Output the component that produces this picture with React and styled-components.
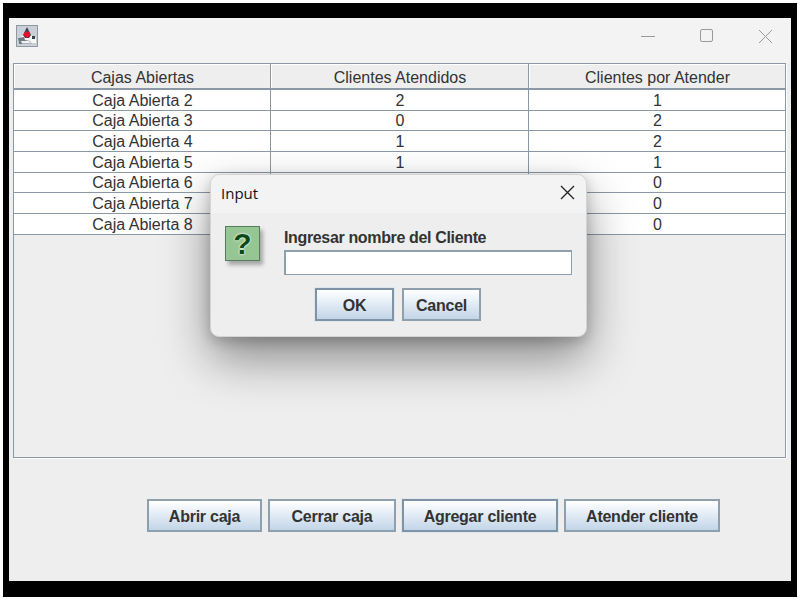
import React from "react";
import styled, { createGlobalStyle } from "styled-components";

const GlobalStyle = createGlobalStyle`
  html, body {
    margin: 0;
    background: #fff;
  }
  * {
    box-sizing: border-box;
  }
`;

const Frame = styled.div`
  width: 800px;
  height: 600px;
  padding: 3px;
  overflow: hidden;
`;

const Bezel = styled.div`
  height: 594px;
  background: #000;
  padding: 15px 6px 16px;
`;

const Win = styled.div`
  position: relative;
  height: 563px;
  background: #eeeeee;
  font-family: "Liberation Sans", Arial, sans-serif;
  color: #333;
  display: flex;
  flex-direction: column;
`;

const TitleBar = styled.div`
  height: 45px;
  flex: none;
  background: #f3f3f3;
  display: flex;
  align-items: center;
  padding: 0 18px 9px 7px;
`;

const Controls = styled.div`
  margin-left: auto;
  display: flex;
  align-items: center;
  gap: 44px;
`;

const TablePanel = styled.div`
  margin: 0 5px 0 4px;
  height: 395px;
  border: 1px solid #8b99a6;
  box-shadow: 1px 1px 0 #fff;
  flex: none;
`;

const Row = styled.div`
  display: grid;
  grid-template-columns: 256px 258px 1fr;
  height: ${(p) => (p.$header ? "26px" : "20.67px")};
  background: ${(p) => (p.$header ? "#eeeeee" : "#fff")};
  border-bottom: ${(p) => (p.$header ? "2px" : "1.5px")} solid #8b99a6;
`;

const Cell = styled.div`
  font-size: 16px;
  line-height: 1;
  padding: ${(p) => (p.$header ? "3px" : "2px")} 0 0 1px;
  display: flex;
  align-items: center;
  justify-content: center;
  border-left: ${(p) => (p.$first ? "none" : "1.5px solid #8b99a6")};
  box-shadow: ${(p) => (p.$header ? "inset 1px 1px 0 #fff" : "none")};
`;

const ButtonBar = styled.div`
  display: flex;
  gap: 6px;
  padding: 41px 0 0 138px;
`;

const Btn = styled.div`
  height: 33px;
  width: ${(p) => p.$w}px;
  padding-top: 2px;
  border: ${(p) => (p.$focus ? "2.5px solid #7f93a6" : "2px solid #8e9fae")};
  background: linear-gradient(#ffffff 0%, #f4f8fc 18%, #c2d5e8 100%);
  box-shadow: ${(p) => (p.$focus ? "0 0 0 1px #dfe6ec" : "none")};
  font-size: 16px;
  letter-spacing: -0.25px;
  font-weight: bold;
  color: #333;
  display: flex;
  align-items: center;
  justify-content: center;
`;

const Dialog = styled.div`
  position: absolute;
  left: 201px;
  top: 156px;
  width: 377px;
  height: 163px;
  background: #eeeeee;
  border-radius: 9px;
  border: 1px solid #d4d4d4;
  box-shadow: 0 22px 48px rgba(0, 0, 0, 0.42), 0 4px 14px rgba(0, 0, 0, 0.2);
`;

const DialogTitle = styled.div`
  height: 38px;
  background: #f3f3f3;
  border-radius: 9px 9px 0 0;
  display: flex;
  align-items: center;
  justify-content: space-between;
  padding: 0 11px 3px 10px;
  font-family: "Open Sans", "Noto Sans", sans-serif;
  font-size: 15px;
  color: #111;
`;

const DialogBody = styled.div`
  display: grid;
  grid-template-columns: 35px 1fr;
  column-gap: 24px;
  padding: 13px 14px 0 14px;
`;

const QuestionIcon = styled.div`
  width: 35px;
  height: 35px;
  background: #97c695;
  border: 1px solid #527f59;
  box-shadow: 3px 4px 4px rgba(0, 0, 0, 0.3);
  color: #0b4a16;
  font-size: 30px;
  font-weight: bold;
  line-height: 33px;
  text-align: center;
  text-shadow: 0 0 2px #eefbe9, 0 0 2px #eefbe9, 0 0 1px #eefbe9;
`;

const PromptCol = styled.div`
  display: flex;
  flex-direction: column;
  padding-top: 3px;
`;

const Prompt = styled.div`
  font-size: 16px;
  letter-spacing: -0.35px;
  font-weight: bold;
  line-height: 17px;
  color: #333;
`;

const NameInput = styled.div`
  margin-top: 4px;
  height: 25px;
  background: #fff;
  border: 2px solid #8e9fae;
  border-right-width: 1px;
  border-bottom-width: 1px;
`;

const DialogButtons = styled.div`
  display: flex;
  gap: 8px;
  margin-top: 13px;
  padding-left: 31px;
`;

const rows = [
  ["Caja Abierta 2", "2", "1"],
  ["Caja Abierta 3", "0", "2"],
  ["Caja Abierta 4", "1", "2"],
  ["Caja Abierta 5", "1", "1"],
  ["Caja Abierta 6", "", "0"],
  ["Caja Abierta 7", "", "0"],
  ["Caja Abierta 8", "", "0"],
];

const AppIcon = () => (
  <svg width="22" height="22" viewBox="0 0 22 22">
    <rect x="0.5" y="0.5" width="21" height="21" fill="#c9d0d7" stroke="#8f99a3" />
    <path d="M2 13l6-3 3-8 3 8 6 3v5H2z" fill="#f7f7f7" />
    <path d="M7 10l4-8 4 8-2 3H9z" fill="#3a424c" />
    <path d="M2 13l6-1 1 3 5 1 2 3H3z" fill="#6f7983" />
    <path d="M5 16h8l3 2.5H6z" fill="#eef0f2" />
    <circle cx="11" cy="9.5" r="3" fill="#e8102a" />
    <rect x="16" y="11" width="3" height="3" fill="#39424c" />
  </svg>
);

const MinIcon = () => (
  <svg width="15" height="14" viewBox="0 0 15 14">
    <path d="M0 7.5h14" stroke="#9a9a9a" strokeWidth="1" />
  </svg>
);

const MaxIcon = () => (
  <svg width="14" height="14" viewBox="0 0 14 14">
    <rect x="0.5" y="0.5" width="12" height="12" rx="1.5" fill="none" stroke="#9a9a9a" />
  </svg>
);

const CloseIcon = ({ color = "#9a9a9a", width = 1 }) => (
  <svg width="15" height="15" viewBox="0 0 15 15">
    <path d="M1 1l13 13M14 1L1 14" stroke={color} strokeWidth={width} fill="none" />
  </svg>
);

export default function App() {
  return (
    <Frame>
      <GlobalStyle />
      <Bezel>
        <Win>
          <TitleBar>
            <AppIcon />
            <Controls>
              <MinIcon />
              <MaxIcon />
              <CloseIcon />
            </Controls>
          </TitleBar>
          <TablePanel>
            <Row $header>
              <Cell $first $header>Cajas Abiertas</Cell>
              <Cell $header>Clientes Atendidos</Cell>
              <Cell $header>Clientes por Atender</Cell>
            </Row>
            {rows.map((r) => (
              <Row key={r[0]}>
                <Cell $first>{r[0]}</Cell>
                <Cell>{r[1]}</Cell>
                <Cell>{r[2]}</Cell>
              </Row>
            ))}
          </TablePanel>
          <ButtonBar>
            <Btn $w={115}>Abrir caja</Btn>
            <Btn $w={128}>Cerrar caja</Btn>
            <Btn $w={156} $focus>Agregar cliente</Btn>
            <Btn $w={156}>Atender cliente</Btn>
          </ButtonBar>
          <Dialog>
            <DialogTitle>
              Input
              <CloseIcon color="#222" width={1.3} />
            </DialogTitle>
            <DialogBody>
              <QuestionIcon>?</QuestionIcon>
              <PromptCol>
                <Prompt>Ingresar nombre del Cliente</Prompt>
                <NameInput />
                <DialogButtons>
                  <Btn $w={79} $focus>OK</Btn>
                  <Btn $w={79}>Cancel</Btn>
                </DialogButtons>
              </PromptCol>
            </DialogBody>
          </Dialog>
        </Win>
      </Bezel>
    </Frame>
  );
}
